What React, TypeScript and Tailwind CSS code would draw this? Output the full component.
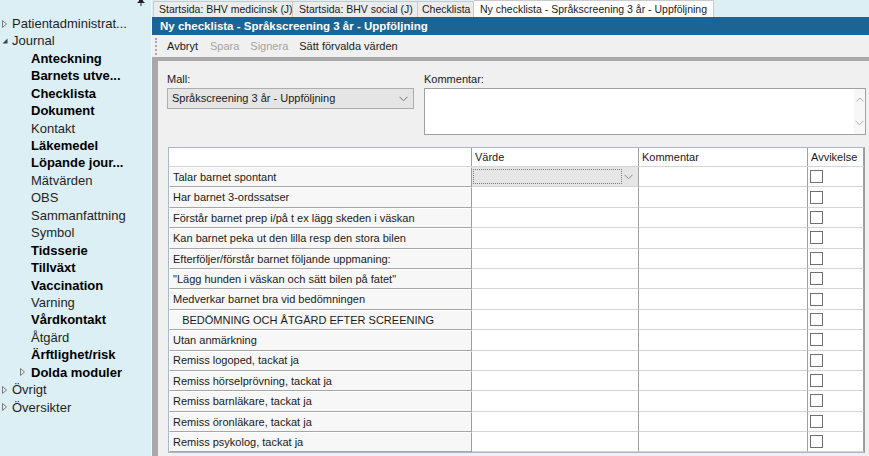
import React from "react";

type Item = { t: string; lvl: 0 | 1; b?: boolean; arrow?: "open" | "closed" };

const nav: Item[] = [
  { t: "Patientadministrat...", lvl: 0, arrow: "closed" },
  { t: "Journal", lvl: 0, arrow: "open" },
  { t: "Anteckning", lvl: 1, b: true },
  { t: "Barnets utve...", lvl: 1, b: true },
  { t: "Checklista", lvl: 1, b: true },
  { t: "Dokument", lvl: 1, b: true },
  { t: "Kontakt", lvl: 1 },
  { t: "Läkemedel", lvl: 1, b: true },
  { t: "Löpande jour...", lvl: 1, b: true },
  { t: "Mätvärden", lvl: 1 },
  { t: "OBS", lvl: 1 },
  { t: "Sammanfattning", lvl: 1 },
  { t: "Symbol", lvl: 1 },
  { t: "Tidsserie", lvl: 1, b: true },
  { t: "Tillväxt", lvl: 1, b: true },
  { t: "Vaccination", lvl: 1, b: true },
  { t: "Varning", lvl: 1 },
  { t: "Vårdkontakt", lvl: 1, b: true },
  { t: "Åtgärd", lvl: 1 },
  { t: "Ärftlighet/risk", lvl: 1, b: true },
  { t: "Dolda moduler", lvl: 1, b: true, arrow: "closed" },
  { t: "Övrigt", lvl: 0, arrow: "closed" },
  { t: "Översikter", lvl: 0, arrow: "closed" },
];

const rows = [
  "Talar barnet spontant",
  "Har barnet 3-ordssatser",
  "Förstår barnet prep i/på t ex lägg skeden i väskan",
  "Kan barnet peka ut den lilla resp den stora bilen",
  "Efterföljer/förstår barnet följande uppmaning:",
  "\"Lägg hunden i väskan och sätt bilen på fatet\"",
  "Medverkar barnet bra vid bedömningen",
  "   BEDÖMNING OCH ÅTGÄRD EFTER SCREENING",
  "Utan anmärkning",
  "Remiss logoped, tackat ja",
  "Remiss hörselprövning, tackat ja",
  "Remiss barnläkare, tackat ja",
  "Remiss öronläkare, tackat ja",
  "Remiss psykolog, tackat ja",
];

function Arrow({ kind }: { kind: "open" | "closed" }) {
  if (kind === "open") {
    return (
      <svg width="6" height="6" viewBox="0 0 6 6">
        <path d="M5.5 0.5 L5.5 5.5 L0.5 5.5 Z" fill="#404040" />
      </svg>
    );
  }
  return (
    <svg width="5" height="8" viewBox="0 0 5 8">
      <path d="M0.5 0.5 L4.5 4 L0.5 7.5 Z" fill="none" stroke="#7a7a7a" strokeWidth="1" />
    </svg>
  );
}

function Chevron({ color = "#707070" }: { color?: string }) {
  return (
    <svg width="9" height="6" viewBox="0 0 9 6">
      <path d="M0.5 0.8 L4.5 4.8 L8.5 0.8" fill="none" stroke={color} strokeWidth="1" />
    </svg>
  );
}

function Checkbox() {
  return <div className="w-[13px] h-[13px] border border-[#6f6f6f] bg-white" />;
}

export default function App() {
  return (
    <div
      className="w-[869px] h-[456px] flex overflow-hidden bg-[#dceff5] text-[#1a1a1a]"
      style={{ fontFamily: '"Liberation Sans", Arial, sans-serif' }}
    >
      {/* Sidebar */}
      <div className="w-[152px] shrink-0 bg-[#dceff5] relative pt-[15px] border-r border-[#eef8fb]">
        <svg className="absolute left-[136px] top-[-2px]" width="10" height="8" viewBox="0 0 10 8">
          <path d="M3 0 L7 0 L7 3 L9 5 L1 5 L3 3 Z" fill="#222" />
          <path d="M5 5 L5 8" stroke="#222" strokeWidth="1" />
        </svg>
        {nav.map((it, i) => (
          <div key={i} className="flex items-center h-[17.45px] text-[13px] whitespace-nowrap">
            {it.lvl === 0 ? (
              <div className="w-[12px] pl-[2px] flex items-center">{it.arrow && <Arrow kind={it.arrow} />}</div>
            ) : (
              <div className="w-[31px] pl-[20px] flex items-center">{it.arrow && <Arrow kind={it.arrow} />}</div>
            )}
            <span className={it.b ? "font-bold text-black" : "text-[#1f1f1f]"}>{it.t}</span>
          </div>
        ))}
      </div>

      {/* Main */}
      <div className="flex-1 flex flex-col min-w-0">
        {/* Tabs */}
        <div className="h-[17px] flex items-end text-[10.5px] bg-[#dceff5] pl-[1px]">
          <div className="h-[16px] w-[140px] shrink-0 overflow-hidden border border-b-0 border-[#c9c9c9] bg-[#ececec] pl-[5px] leading-[15px] whitespace-nowrap">
            Startsida: BHV medicinsk (J)
          </div>
          <div className="h-[16px] w-[125px] shrink-0 overflow-hidden border border-b-0 border-l-0 border-[#c9c9c9] bg-[#ececec] pl-[6px] leading-[15px] whitespace-nowrap">
            Startsida: BHV social (J)
          </div>
          <div className="h-[16px] w-[56px] shrink-0 overflow-hidden border border-b-0 border-l-0 border-[#c9c9c9] bg-[#ececec] pl-[4px] leading-[15px] whitespace-nowrap">
            Checklista
          </div>
          <div className="h-[17px] w-[240px] shrink-0 overflow-hidden border border-b-0 border-l-0 border-[#c9c9c9] bg-white pl-[6px] leading-[16px] whitespace-nowrap">
            Ny checklista - Språkscreening 3 år - Uppföljning
          </div>
        </div>

        {/* Title bar */}
        <div className="h-[18px] bg-[#1b6596] text-white font-bold text-[11.5px] leading-[18px] pl-[8px] whitespace-nowrap">
          Ny checklista - Språkscreening 3 år - Uppföljning
        </div>

        {/* Toolbar */}
        <div className="h-[22px] bg-[#f0f0f0] flex items-center text-[11px] pl-[3px]">
          <div className="h-[17px] w-[2px] border-l-2 border-dotted border-[#a8a8a8] mr-[10px]" />
          <span className="mr-[12px]">Avbryt</span>
          <span className="mr-[11px] text-[#a3a3a3]">Spara</span>
          <span className="mr-[11px] text-[#a3a3a3]">Signera</span>
          <span>Sätt förvalda värden</span>
        </div>

        {/* Body with gray frame */}
        <div className="flex-1 bg-[#a9a9a9] pt-[4px] pl-[6px]">
          <div className="h-full bg-[#f0f0f0] pl-[9px] pt-[11px] text-[11px]">
            {/* Form row */}
            <div className="flex">
              <div className="w-[247px]">
                <div className="h-[15px] leading-[15px]">Mall:</div>
                <div className="mt-[1px] h-[21px] w-[247px] bg-[#e5e5e5] border border-[#adadad] flex items-center justify-between pl-[4px] pr-[5px]">
                  <span>Språkscreening 3 år - Uppföljning</span>
                  <Chevron />
                </div>
              </div>
              <div className="ml-[10px] flex-1 pr-[3px]">
                <div className="h-[15px] leading-[15px]">Kommentar:</div>
                <div className="mt-[1px] h-[47px] bg-white border border-[#a0a0a0] flex justify-end">
                  <div className="w-[11px] bg-[#f7f7f7] flex flex-col items-center justify-between py-[8px]">
                    <svg width="8" height="5" viewBox="0 0 8 5">
                      <path d="M0.5 4.5 L4 1 L7.5 4.5" fill="none" stroke="#b0b0b0" strokeWidth="1" />
                    </svg>
                    <Chevron color="#b0b0b0" />
                  </div>
                </div>
              </div>
            </div>

            {/* Table */}
            <div className="mt-[12px] ml-[1px] w-[697px] border border-[#a9b9c9] border-r-[#9a9a9a] bg-white">
              <div className="flex h-[19px] border-b border-[#d4d4d4]">
                <div className="w-[303px] border-r border-[#a0a0a0]" />
                <div className="w-[167px] border-r border-[#a0a0a0] pl-[3px] leading-[18px]">Värde</div>
                <div className="w-[169px] border-r border-[#a0a0a0] pl-[3px] leading-[18px]">Kommentar</div>
                <div className="flex-1 pl-[3px] leading-[18px] border-r border-[#a0a0a0]">Avvikelse</div>
              </div>
              {rows.map((r, i) => (
                <div key={i} className="flex h-[20.4px]">
                  <div className="w-[303px] bg-[#f7f7f7] border-t border-l border-white border-r border-b border-r-[#9d9d9d] border-b-[#a6a6a6] pl-[3px] flex items-center whitespace-pre">
                    {r}
                  </div>
                  <div className="w-[167px] border-r border-b border-r-[#a0a0a0] border-b-[#d4d4d4] flex items-center">
                    {i === 0 && (
                      <div className="w-full h-full bg-[#e6e6e6] flex items-center pl-[1px] pr-[5px]">
                        <div className="w-[149px] h-[15px] border border-dotted border-[#7a7a7a]" />
                        <div className="ml-auto">
                          <Chevron color="#8a8a8a" />
                        </div>
                      </div>
                    )}
                  </div>
                  <div className="w-[169px] border-r border-b border-r-[#a0a0a0] border-b-[#d4d4d4]" />
                  <div className="flex-1 border-b border-r border-b-[#d4d4d4] border-r-[#a0a0a0] flex items-center pl-[2px]">
                    <Checkbox />
                  </div>
                </div>
              ))}
            </div>
          </div>
        </div>
      </div>
    </div>
  );
}
